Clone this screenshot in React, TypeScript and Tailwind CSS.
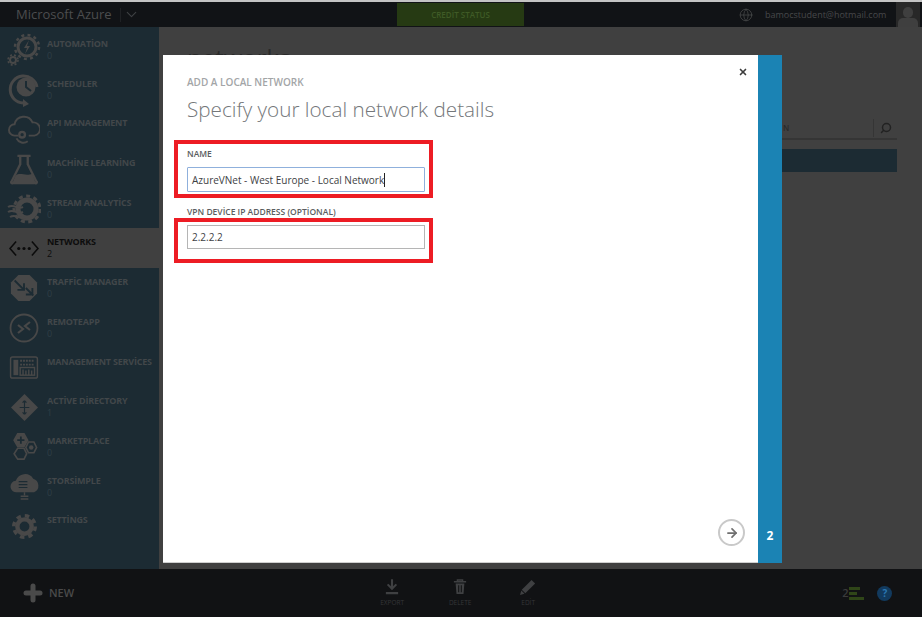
import React from 'react';
import { Search, X, ArrowRight, Globe, ChevronDown, Plus } from 'lucide-react';

const iconColor = '#484848';

const Automation = () => (
  <svg viewBox="0 0 34 34" className="w-[34px] h-[34px]" fill="none" stroke={iconColor}>
    <circle cx="20" cy="14" r="9" strokeWidth="3" />
    <circle cx="20" cy="14" r="12" strokeWidth="2.5" strokeDasharray="3 3.3" />
    <path d="M22 7l-5 8h3l-2 6 5-8h-3z" fill={iconColor} stroke="none" />
    <circle cx="6" cy="27" r="3" strokeWidth="2" />
    <circle cx="6" cy="27" r="5" strokeWidth="1.6" strokeDasharray="2 2" />
  </svg>
);
const Scheduler = () => (
  <svg viewBox="0 0 34 34" className="w-[34px] h-[34px]" fill="none" stroke={iconColor}>
    <path d="M16 30A13.500 13.500 0 1 1 30 14" strokeWidth="3" />
    <circle cx="19" cy="14" r="9.500" fill={iconColor} stroke="none" />
    <path d="M19 8v6l5 4" stroke="#1c2b33" strokeWidth="2" />
    <path d="M16 26l6 5-6 3z" fill={iconColor} stroke="none" />
  </svg>
);
const ApiCloud = () => (
  <svg viewBox="0 0 34 34" className="w-[32px] h-[32px]" fill="none" stroke={iconColor} strokeWidth="2">
    <path d="M11 24H7a6 6 0 0 1 0-12 10 10 0 0 1 19-2 7 7 0 0 1 2 14h-6" />
    <circle cx="15" cy="23" r="3" strokeWidth="2.500" />
    <path d="M9 27a8 8 0 0 0 12 3" />
  </svg>
);
const Flask = () => (
  <svg viewBox="0 0 34 34" className="w-[32px] h-[32px]" fill="none" stroke={iconColor} strokeWidth="2.500">
    <path d="M10 3h14M13 3v9L4 30a1 1 0 0 0 1 2h24a1 1 0 0 0 1-2l-9-18V3" />
    <path d="M8 24c5-4 10 1 18-2l3 9H5z" fill={iconColor} stroke="none" />
  </svg>
);
const Stream = () => (
  <svg viewBox="0 0 34 34" className="w-[34px] h-[34px]" fill="none" stroke={iconColor}>
    <circle cx="20" cy="17" r="9" strokeWidth="5" />
    <circle cx="20" cy="17" r="13" strokeWidth="3" strokeDasharray="4 3.500" />
    <path d="M1 15c6-4 9 3 15 0M1 20c6-4 9 3 15 0M3 25c6-4 9 3 15 0" strokeWidth="2" />
  </svg>
);
const NetworksIcon = () => (
  <svg viewBox="0 0 34 24" className="w-[30px] h-[21px]" fill="none" stroke="#0b0b0b" strokeWidth="1.800">
    <path d="M8 4l-7 8 7 8M26 4l7 8-7 8" />
    <circle cx="11" cy="12" r="1.800" fill="#0b0b0b" stroke="none" />
    <circle cx="17" cy="12" r="1.800" fill="#0b0b0b" stroke="none" />
    <circle cx="23" cy="12" r="1.800" fill="#0b0b0b" stroke="none" />
  </svg>
);
const Traffic = () => (
  <svg viewBox="0 0 30 30" className="w-[28px] h-[28px]">
    <path d="M9 1h12l8 8v12l-8 8H9l-8-8V9z" fill={iconColor} />
    <path d="M5 7l10 10M15 10v7H8M25 23L17 15M17 22h7v-7" stroke="#1c2b33" strokeWidth="2" fill="none" />
  </svg>
);
const RemoteApp = () => (
  <svg viewBox="0 0 30 30" className="w-[30px] h-[30px]" fill="none" stroke={iconColor} strokeWidth="1.800">
    <circle cx="15" cy="15" r="13.500" />
    <path d="M9 12l5 4-5 4M21 9l-5 4 5 4" strokeWidth="2.200" />
  </svg>
);
const Management = () => (
  <svg viewBox="0 0 30 24" className="w-[30px] h-[23px]" fill="none" stroke={iconColor} strokeWidth="1.500">
    <rect x="1" y="1" width="28" height="22" rx="2" />
    <rect x="4" y="4" width="5" height="16" fill={iconColor} stroke="none" />
    <path d="M11 5h15M11 9h15" strokeDasharray="2 1" strokeWidth="2" />
    <rect x="11" y="12" width="15" height="8" />
    <path d="M14 14v6M17 15v5M20 14v6M23 15v5" />
  </svg>
);
const Directory = () => (
  <svg viewBox="0 0 28 28" className="w-[27px] h-[27px]">
    <path d="M14 0l14 14-14 14L0 14z" fill={iconColor} />
    <path d="M14 7v14M9 14h10M14 7l-2 2M14 7l2 2M14 21l-2-2M14 21l2-2" stroke="#1c2b33" strokeWidth="1.200" fill="none" />
  </svg>
);
const Market = () => (
  <svg viewBox="0 0 30 30" className="w-[28px] h-[27px]" fill="none" stroke={iconColor} strokeWidth="1.800">
    <path d="M8 1h7l4 7-4 7H8L4 8z" fill={iconColor} />
    <path d="M11.500 4v8M7.500 8h8" stroke="#1c2b33" strokeWidth="2" />
    <path d="M8 17h7l3 6-3 6H8l-4-6z" />
    <path d="M20 10h6l3 6-3 6h-6l-3-6z" />
    <circle cx="23" cy="16" r="2.500" fill={iconColor} stroke="none" />
  </svg>
);
const StorSimple = () => (
  <svg viewBox="0 0 32 30" className="w-[31px] h-[29px]">
    <path d="M8 21a6 6 0 0 1-1-12 10 10 0 0 1 18-2 7.500 7.500 0 0 1 1 14z" fill={iconColor} />
    <path d="M10 10h9M10 13h9M10 16h9" stroke="#1c2b33" strokeWidth="1.200" />
    <path d="M16 21v3M12 25h8M12 28h8" stroke={iconColor} strokeWidth="1.500" />
  </svg>
);
const Gear = () => (
  <svg viewBox="0 0 28 28" className="w-[25px] h-[25px]" fill="none" stroke={iconColor}>
    <circle cx="14" cy="14" r="8" strokeWidth="5" />
    <circle cx="14" cy="14" r="12" strokeWidth="4" strokeDasharray="5 4.420" />
  </svg>
);

const ExportIcon = () => (
  <svg viewBox="0 0 16 18" className="w-[14px] h-[16px]" fill="none" stroke="#3f4042" strokeWidth="2.400">
    <path d="M8 0v10M3 6l5 5 5-5M1 16h14" />
  </svg>
);
const DeleteIcon = () => (
  <svg viewBox="0 0 16 18" className="w-[14px] h-[16px]" fill="none" stroke="#3f4042">
    <path d="M1 3h14M5 3V1h6v2" strokeWidth="1.500" />
    <path d="M3 5h10l-1 12H4z" fill="#3f4042" stroke="none" />
    <path d="M6.500 7v8M9.500 7v8" stroke="#111214" strokeWidth="1.200" />
  </svg>
);
const EditIcon = () => (
  <svg viewBox="0 0 18 18" className="w-[16px] h-[16px]" fill="#3f4042">
    <path d="M13 1l4 4L6 16l-4-4z" />
    <path d="M1.500 13l3.500 3.500L0 18z" />
  </svg>
);

const navItems = [
  { label: 'AUTOMATİON', count: '0', icon: <Automation /> },
  { label: 'SCHEDULER', count: '0', icon: <Scheduler /> },
  { label: 'API MANAGEMENT', count: '0', icon: <ApiCloud /> },
  { label: 'MACHİNE LEARNİNG', count: '0', icon: <Flask /> },
  { label: 'STREAM ANALYTİCS', count: '0', icon: <Stream /> },
  { label: 'NETWORKS', count: '2', icon: <NetworksIcon />, active: true },
  { label: 'TRAFFİC MANAGER', count: '0', icon: <Traffic /> },
  { label: 'REMOTEAPP', count: '0', icon: <RemoteApp /> },
  { label: 'MANAGEMENT SERVİCES', count: '', icon: <Management /> },
  { label: 'ACTİVE DİRECTORY', count: '1', icon: <Directory /> },
  { label: 'MARKETPLACE', count: '0', icon: <Market /> },
  { label: 'STORSİMPLE', count: '0', icon: <StorSimple /> },
  { label: 'SETTİNGS', count: '', icon: <Gear /> },
];

const toolbar = [
  { label: 'EXPORT', icon: <ExportIcon /> },
  { label: 'DELETE', icon: <DeleteIcon /> },
  { label: 'EDİT', icon: <EditIcon /> },
];

export default function App() {
  return (
    <div className="w-[922px] h-[617px] overflow-hidden flex flex-col bg-[#404040] font-['Open_Sans','Noto_Sans',sans-serif]">
      {/* top bar */}
      <header className="h-[27px] shrink-0 bg-[#111316] border-t-[2px] border-[#c4c4c4] flex items-center">
        <span className="ml-[16px] w-[92px] text-[13px] leading-none text-[#4c4d4e] whitespace-nowrap">Microsoft Azure</span>
        <div className="ml-[12px] w-px h-[14px] bg-[#1f2124]" />
        <ChevronDown className="ml-[2px] w-[17px] h-[17px] text-[#3f4144]" strokeWidth={1.5} />
        <div className="ml-[257px] w-[127px] h-[23px] bg-[#263a13] flex items-center justify-center text-[8px] font-semibold text-[#3f5a26]">
          CREDİT STATUS
        </div>
        <Globe className="ml-[215px] w-[14px] h-[14px] text-[#4c4d4e]" strokeWidth={1.2} />
        <span className="ml-[12px] w-[124px] text-[9px] text-[#47484a] whitespace-nowrap">bamocstudent@hotmail.com</span>
        <div className="ml-[7px] w-[24px] h-[25px] bg-[#282828] flex flex-col items-center justify-end overflow-hidden">
          <div className="w-[10px] h-[11px] rounded-full bg-[#3f3f3f]" />
          <div className="w-[20px] h-[9px] rounded-t-[5px] bg-[#3f3f3f]" />
        </div>
      </header>

      <div className="flex-1 flex min-h-0 relative">
        {/* sidebar */}
        <nav className="w-[159px] shrink-0 bg-[#1c2b33] pt-[3px]">
          {navItems.map((item) => (
            <div key={item.label} className={`h-[39.7px] flex items-start ${item.active ? 'bg-[#404040]' : ''}`}>
              <div className="w-[47px] h-full shrink-0 flex items-center justify-center pl-[1px]">{item.icon}</div>
              <div className="pt-[8px]">
                <div className={`text-[9px] leading-[12px] font-bold whitespace-nowrap tracking-[-0.2px] ${item.active ? 'text-[#0d0d0d]' : 'text-[#42474a]'}`}>{item.label}</div>
                <div className={`text-[9px] leading-[12px] ${item.active ? 'text-[#0d0d0d]' : 'text-[#2f3e46]'}`}>{item.count}</div>
              </div>
            </div>
          ))}
        </nav>

        {/* page behind the dialog */}
        <main className="flex-1 min-w-0 pl-[28px] pr-[25px] pt-[16px]">
          <h2 className="text-[24px] leading-[30px] text-[#2a2a2a]">networks</h2>
          <div className="mt-[45px] ml-[595px] h-[22px] border-b-[2px] border-[#353535] flex items-center relative">
            <span className="ml-[1px] text-[8px] font-semibold text-[#2a2a2a]">N</span>
            <div className="ml-auto w-[24px] h-[18px] border-l border-[#353535] flex items-center justify-center">
              <Search className="w-[12px] h-[12px] text-[#222222] -scale-x-100" strokeWidth={3} />
            </div>
          </div>
          <div className="mt-[9px] ml-[595px] h-[23px] bg-[#1c2b33]" />
        </main>

        {/* dialog */}
        <div className="absolute left-[163px] top-[28px] w-[619px] h-[508px] flex">
          <div className="w-[595px] bg-white relative border-b border-[#cfcfcf]">
            <button className="absolute right-[10px] top-[12px] text-[#3d3d3d]">
              <X className="w-[10px] h-[10px]" strokeWidth={4} />
            </button>
            <div className="pl-[24px] pt-[21px] text-[10px] leading-[12px] font-semibold text-[#a3a5a7]">ADD A LOCAL NETWORK</div>
            <h1 className="pl-[24px] mt-[5px] text-[20.700px] leading-[32px] font-light text-[#74777a] whitespace-nowrap">Specify your local network details</h1>
            <div className="ml-[11px] mt-[15px] w-[259px] h-[58px] border-[4px] border-[#ed1c24] pl-[9px] pt-[4px]">
              <label className="block text-[8.500px] leading-[12px] font-semibold text-[#5a5d60]">NAME</label>
              <div className="mt-[7px] w-[238px] h-[25px] border border-[#8fb0dc] rounded-[1px] flex items-center pl-[4px]">
                <span className="text-[10px] text-[#3e4144] whitespace-nowrap border-r border-[#222222] leading-[14px]">AzureVNet - West Europe - Local Network</span>
              </div>
            </div>
            <label className="block ml-[24px] mt-[8px] text-[8.500px] leading-[12px] font-semibold text-[#5a5d60]">VPN DEVİCE IP ADDRESS (OPTİONAL)</label>
            <div className="ml-[11px] w-[259px] h-[45px] border-[4px] border-[#ed1c24] pl-[9px] pt-[3px]">
              <div className="w-[238px] h-[24px] border border-[#b5b5b5] flex items-center pl-[4px]">
                <span className="text-[10px] text-[#3e4144]">2.2.2.2</span>
              </div>
            </div>
            <div className="absolute right-[13px] bottom-[16px] w-[27px] h-[27px] rounded-full border-[2px] border-[#c9c9c9] flex items-center justify-center text-[#6f6f6f]">
              <ArrowRight className="w-[14px] h-[14px]" strokeWidth={3} />
            </div>
          </div>
          <div className="w-[24px] bg-[#1b83b4] flex items-end justify-center pb-[19px]">
            <span className="text-[12px] leading-[16px] font-bold text-white">2</span>
          </div>
        </div>
      </div>

      {/* bottom bar */}
      <footer className="h-[48px] shrink-0 bg-[#111214] flex items-center">
        <Plus className="ml-[21px] w-[24px] h-[24px] text-[#4a4a4a]" strokeWidth={5} />
        <span className="ml-[4px] text-[11px] font-semibold text-[#4a4a4a]">NEW</span>
        <div className="ml-[303px] flex gap-[38px]">
          {toolbar.map((t) => (
            <div key={t.label} className="w-[30px] flex flex-col items-center">
              {t.icon}
              <span className="mt-[3px] text-[6.500px] leading-[9px] text-[#353638]">{t.label}</span>
            </div>
          ))}
        </div>
        <span className="ml-[299px] text-[11px] font-semibold text-[#3b3b3b]">2</span>
        <div className="ml-[1px] w-[16px] flex flex-col gap-[2px]">
          <div className="w-[11px] h-[3px] bg-[#2f4518]" />
          <div className="w-[8px] h-[3px] bg-[#2f4518]" />
          <div className="w-[15px] h-[3px] bg-[#2f4518]" />
        </div>
        <div className="ml-[12px] w-[15px] h-[15px] rounded-full bg-[#123a5e] flex items-center justify-center text-[10px] font-bold text-[#2a76b0]">?</div>
      </footer>
    </div>
  );
}
